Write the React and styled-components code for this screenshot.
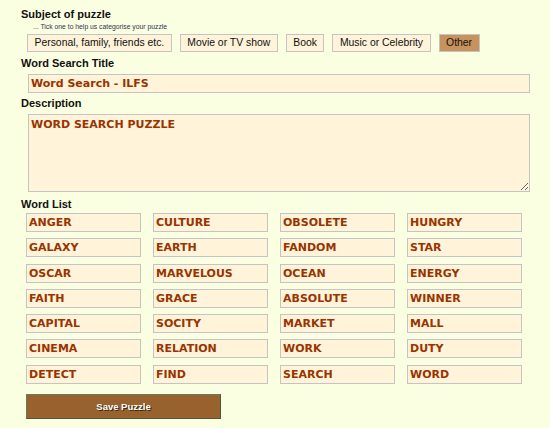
import React from "react";
import styled, { createGlobalStyle } from "styled-components";

const Global = createGlobalStyle`
  html, body { margin: 0; padding: 0; background: #FAFFE1; }
  body { font-family: "Liberation Sans", Arial, sans-serif; }
`;

const Page = styled.div`
  width: 550px;
  height: 428px;
  box-sizing: border-box;
  padding: 8px 0 0 21px;
  background: #FAFFE1;
  overflow: hidden;
`;

const Label = styled.div`
  font: bold 11px/13px "Liberation Sans", Arial, sans-serif;
  color: #111;
  margin-top: ${(p) => p.$mt || 0}px;
`;

const Hint = styled.div`
  font: 6.8px/9px "Liberation Sans", Arial, sans-serif;
  color: #333355;
  margin: 1px 0 0 12px;
`;

const Choices = styled.div`
  display: flex;
  gap: 8px;
  margin: 3px 0 0 6px;
`;

const Choice = styled.button`
  height: 18px;
  box-sizing: border-box;
  padding: 0 6.5px;
  border: 1px solid #c4c4c4;
  background: ${(p) => (p.$active ? "#C8925C" : "#FFF3DA")};
  font: 10.4px/16px "Liberation Sans", Arial, sans-serif;
  color: #111;
  cursor: pointer;
`;

const TextInput = styled.div`
  margin: 4px 0 0 7px;
  width: 502px;
  height: 19px;
  box-sizing: border-box;
  border: 1px solid #c4c4c4;
  background: #FFF3DA;
  padding: 0 0 0 2px;
  font: bold 11px/17px "DejaVu Sans", Verdana, sans-serif;
  color: #993300;
`;

const TextArea = styled.textarea`
  display: block;
  margin: 4px 0 0 7px;
  width: 502px;
  height: 78px;
  box-sizing: border-box;
  border: 1px solid #c4c4c4;
  background: #FFF3DA;
  padding: 3px 2px;
  font: bold 11px/13px "DejaVu Sans", Verdana, sans-serif;
  color: #993300;
  resize: both;
  outline: none;
`;

const WordGrid = styled.div`
  display: grid;
  grid-template-columns: repeat(4, 115px);
  column-gap: 12px;
  row-gap: 6.3px;
  margin: 2px 0 0 5px;
`;

const WordBox = styled.div`
  height: 19px;
  box-sizing: border-box;
  border: 1px solid #c4c4c4;
  background: #FFF3DA;
  padding-left: 2px;
  font: bold 11px/17px "DejaVu Sans", Verdana, sans-serif;
  color: #993300;
`;

const SaveButton = styled.button`
  display: block;
  margin: 10px 0 0 5px;
  width: 195px;
  height: 25px;
  box-sizing: border-box;
  border: 1px solid #4e5a3c;
  border-top-color: #6c7a5a;
  border-left-color: #6c7a5a;
  background: #98622F;
  color: #fff;
  font: bold 9.5px/21px "Liberation Sans", Arial, sans-serif;
  text-shadow: 1px 1px 0 #3a2a10;
  cursor: pointer;
`;

const choices = [
  "Personal, family, friends etc.",
  "Movie or TV show",
  "Book",
  "Music or Celebrity",
  "Other",
];

const words = [
  "ANGER", "CULTURE", "OBSOLETE", "HUNGRY",
  "GALAXY", "EARTH", "FANDOM", "STAR",
  "OSCAR", "MARVELOUS", "OCEAN", "ENERGY",
  "FAITH", "GRACE", "ABSOLUTE", "WINNER",
  "CAPITAL", "SOCITY", "MARKET", "MALL",
  "CINEMA", "RELATION", "WORK", "DUTY",
  "DETECT", "FIND", "SEARCH", "WORD",
];

export default function App() {
  return (
    <>
      <Global />
      <Page>
        <Label>Subject of puzzle</Label>
        <Hint>... Tick one to help us categorise your puzzle</Hint>
        <Choices>
          {choices.map((c) => (
            <Choice key={c} $active={c === "Other"}>{c}</Choice>
          ))}
        </Choices>
        <Label $mt={5}>Word Search Title</Label>
        <TextInput>Word Search - ILFS</TextInput>
        <Label $mt={4}>Description</Label>
        <TextArea defaultValue="WORD SEARCH PUZZLE" />
        <Label $mt={6}>Word List</Label>
        <WordGrid>
          {words.map((w) => (
            <WordBox key={w}>{w}</WordBox>
          ))}
        </WordGrid>
        <SaveButton>Save Puzzle</SaveButton>
      </Page>
    </>
  );
}
